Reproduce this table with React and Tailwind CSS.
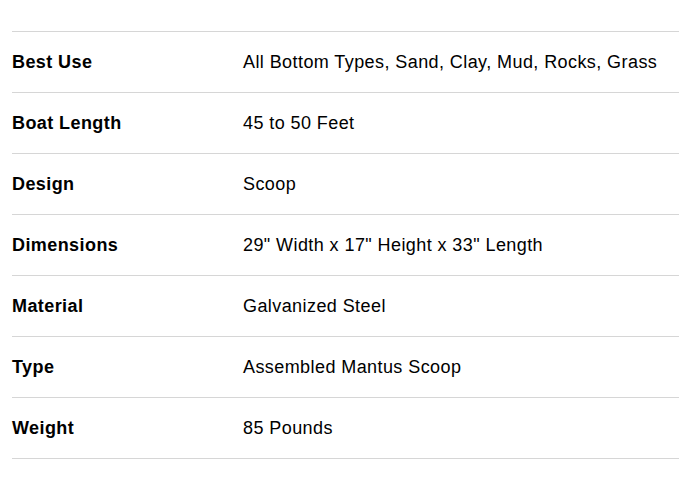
export default function App() {
  const rows = [
    ["Best Use", "All Bottom Types, Sand, Clay, Mud, Rocks, Grass"],
    ["Boat Length", "45 to 50 Feet"],
    ["Design", "Scoop"],
    ["Dimensions", '29" Width x 17" Height x 33" Length'],
    ["Material", "Galvanized Steel"],
    ["Type", "Assembled Mantus Scoop"],
    ["Weight", "85 Pounds"],
  ];
  return (
    <div className="w-[679px] h-[479px] bg-white pt-[31px] pl-[12px] text-black" style={{ fontFamily: '"Liberation Sans", Arial, sans-serif' }}>
      <div className="border-t border-[#d6d6d6]">
        {rows.map(([k, v]) => (
          <div key={k} className="flex items-center h-[61px] border-b border-[#d6d6d6] text-[18px] tracking-[0.42px]">
            <div className="w-[231px] font-bold">{k}</div>
            <div>{v}</div>
          </div>
        ))}
      </div>
    </div>
  );
}
